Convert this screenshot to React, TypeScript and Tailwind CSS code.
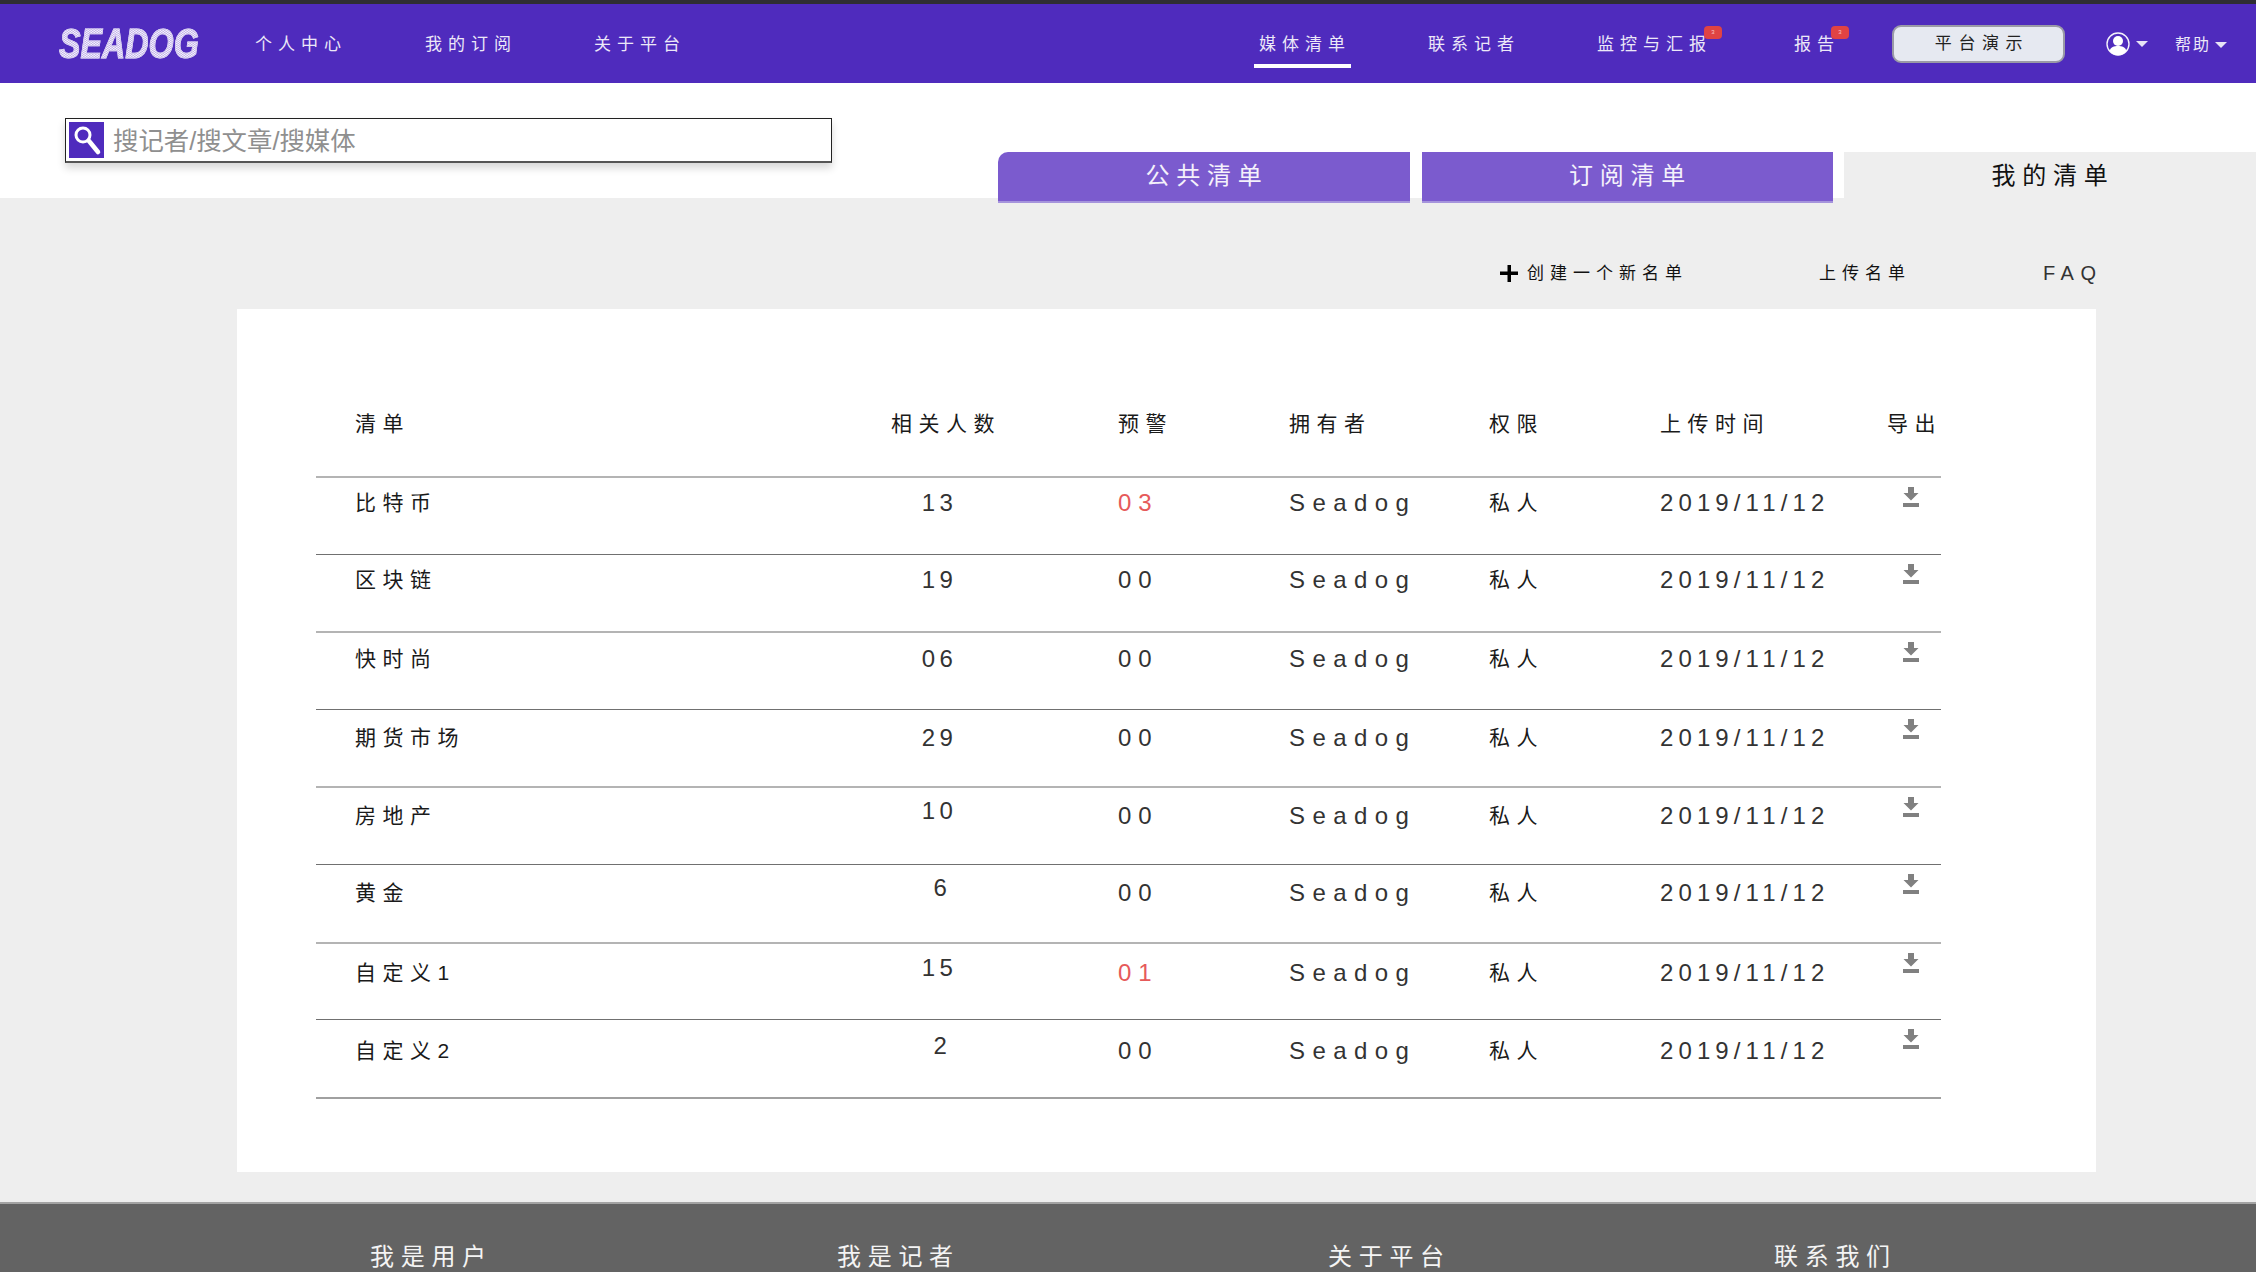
const PURPLE = "bg-[#4f2bbd]";

const rows = [
  { name: "比特币", count: "13", warn: "03", pt: "pt-[15px]", line: "border-t-2 border-[#b4b4b4]" },
  { name: "区块链", count: "19", warn: "00", pt: "pt-[15px]", line: "border-t border-[#707070]" },
  { name: "快时尚", count: "06", warn: "00", pt: "pt-[16px]", line: "border-t-2 border-[#b4b4b4]" },
  { name: "期货市场", count: "29", warn: "00", pt: "pt-[18px]", line: "border-t border-[#707070]" },
  { name: "房地产", count: "10", warn: "00", pt: "pt-[18px]", line: "border-t-2 border-[#b4b4b4]", up: true },
  { name: "黄金", count: "6", warn: "00", pt: "pt-[18px]", line: "border-t border-[#707070]", up: true },
  { name: "自定义1", count: "15", warn: "01", pt: "pt-[19px]", line: "border-t-2 border-[#b4b4b4]", up: true },
  { name: "自定义2", count: "2", warn: "00", pt: "pt-[21px]", line: "border-t border-[#707070]", up: true },
];

function Caret() {
  return (
    <svg width="12" height="6" viewBox="0 0 12 6" className="fill-[#e8e4f6]">
      <path d="M0 0h12L6 6z" />
    </svg>
  );
}

function Badge({ className }: { className: string }) {
  return (
    <span className={`absolute top-[-6px] flex h-[13px] w-[18px] items-center justify-center rounded-[4px] bg-[#e04343] text-[6px] leading-none tracking-normal text-[#f7c3c3] ${className}`}>
      3
    </span>
  );
}

function DownloadIcon() {
  return (
    <svg width="16" height="20" viewBox="0 0 16 20" className="fill-[#808080]">
      <path d="M5 0h6v6h4.500L8 13.500.5 6H5z" />
      <rect x="0" y="16" width="16" height="4" />
    </svg>
  );
}

export default function App() {
  return (
    <div className="relative h-[1272px] w-[2256px] overflow-hidden bg-[#eeeeee] font-[Liberation_Sans,Noto_Sans_CJK_SC,sans-serif] text-[#1a1a1a]">
      <div className="h-[4px] bg-[#2f2e33]" />

      <header className={`relative flex h-[79px] items-center pt-[2px] text-[17px] tracking-[6px] text-[#ece8f8] ${PURPLE}`}>
        <div className="absolute left-[59px] top-[24px] flex h-[31px] w-[138px] items-center">
          <span className="origin-left scale-x-[0.75] bg-[repeating-conic-gradient(#ffffff_0_25%,#b9a8e6_0_50%)] bg-[length:2px_2px] bg-clip-text text-[43px] leading-none font-bold tracking-normal text-transparent italic [-webkit-text-stroke:1px_#d6ccf0]">
            SEADOG
          </span>
        </div>
        <nav className="ml-[255px] flex">
          <a className="w-[170px]">个人中心</a>
          <a className="w-[169px]">我的订阅</a>
          <a>关于平台</a>
        </nav>
        <nav className="absolute left-[1259px] flex">
          <a className="relative w-[169px]">
            媒体清单
            <span className="absolute top-[32px] left-[-5px] h-[4px] w-[97px] bg-white" />
          </a>
          <a className="w-[169px]">联系记者</a>
          <a className="relative w-[197px]">
            监控与汇报
            <Badge className="left-[107px]" />
          </a>
          <a className="relative">
            报告
            <Badge className="left-[37px]" />
          </a>
        </nav>
        <button className="absolute left-[1892px] top-[21px] flex h-[38px] w-[173px] items-center justify-center rounded-[9px] border-2 border-[#9a9aa6] bg-[#e6e9f1] pl-[7px] text-[17px] tracking-[6.6px] text-[#222]">
          平台演示
        </button>
        <div className="absolute left-[2106px] top-[28px] flex items-center gap-[6px]">
          <svg width="24" height="24" viewBox="0 0 24 24">
            <circle cx="12" cy="12" r="11" fill="none" stroke="#f4f2fb" strokeWidth="1.4" />
            <circle cx="12" cy="9" r="5" fill="#fff" />
            <path d="M3.500 19c1-4 4.500-5 8.500-5s7.500 1 8.500 5c-2 2.800-5 4.300-8.500 4.300S5.500 21.800 3.500 19z" fill="#fff" />
          </svg>
          <Caret />
        </div>
        <div className="absolute left-[2175px] top-[32px] flex items-center text-[16px] leading-[17px] tracking-[2px]">
          <span className="w-[40px]">帮助</span>
          <Caret />
        </div>
      </header>

      <section className="relative h-[115px] bg-white">
        <div className="absolute left-[65px] top-[35px] flex h-[45px] w-[767px] items-center gap-[9px] border border-b-2 border-[#222] border-b-[#555] bg-white pl-[3px] shadow-[0_5px_8px_rgba(0,0,0,0.16)]">
          <span className={`flex h-[36px] w-[35px] shrink-0 items-center justify-center ${PURPLE}`}>
            <svg width="30" height="32" viewBox="0 0 30 32" fill="none" stroke="#fff" strokeLinecap="round">
              <circle cx="11" cy="11" r="7" strokeWidth="3" />
              <path d="M17 17l9 11" strokeWidth="4.500" />
            </svg>
          </span>
          <span className="pt-[3px] text-[25.4px] leading-none text-[#8f8f8f]">搜记者/搜文章/搜媒体</span>
        </div>

        <div className="absolute left-[998px] top-[69px] flex text-[24px] leading-[24px] tracking-[6.7px] text-[#f4f1fb]">
          <div className="flex h-[51px] w-[412px] items-center justify-center rounded-tl-[10px] border-b-2 border-[#a594dc] bg-[#7b5bce] pb-[2px] pl-[6px]">公共清单</div>
          <div className="ml-[12px] flex h-[51px] w-[411px] items-center justify-center border-b-2 border-[#a594dc] bg-[#7b5bce] pb-[2px] pl-[6px]">订阅清单</div>
          <div className="ml-[11px] flex h-[46px] w-[412px] items-center justify-center bg-[#eeeeee] pt-[2px] pl-[6px] text-[#111]">我的清单</div>
        </div>
      </section>

      <div className="absolute left-[1500px] top-[265px] flex h-[17px] items-center text-[17px] leading-[17px] tracking-[6px] text-[#111]">
        <svg width="18" height="17" viewBox="0 0 18 17" className="mr-[9px] fill-black">
          <rect x="7.500" y="0" width="3.500" height="17" />
          <rect x="0" y="6.500" width="18" height="3.500" />
        </svg>
        创建一个新名单
      </div>
      <div className="absolute left-[1819px] top-[265px] text-[17px] leading-[17px] tracking-[6px] text-[#111]">上传名单</div>
      <div className="absolute left-[2043px] top-[265px] text-[20px] leading-[17px] tracking-[6.5px] text-[#333]">FAQ</div>

      <main className="absolute left-[237px] top-[309px] h-[863px] w-[1859px] bg-white pt-[105px] pl-[79px] text-[21px] leading-[20px] tracking-[6.5px]">
        <div className="grid h-[62px] w-[1625px] grid-cols-[536px_227px_171px_200px_171px_227px_1fr] pl-[39px] whitespace-nowrap">
          <div>清单</div>
          <div>相关人数</div>
          <div>预警</div>
          <div>拥有者</div>
          <div>权限</div>
          <div>上传时间</div>
          <div>导出</div>
        </div>
        <div className="w-[1625px] border-b-2 border-[#a0a0a0]">
          {rows.map((row) => (
            <div
              key={row.name}
              className={`relative grid h-[77.6px] grid-cols-[536px_227px_171px_200px_171px_227px_1fr] pl-[39px] whitespace-nowrap ${row.line} ${row.pt}`}
            >
              <div>{row.name}</div>
              <div>
                <div className={`w-[97px] text-center text-[24px] tracking-[4.5px] text-[#333] ${row.count.length === 1 ? "pl-[6px]" : ""} ${row.up ? "-translate-y-[5px]" : ""}`}>{row.count}</div>
              </div>
              <div className={`text-[24px] tracking-[7px] ${row.warn === "00" ? "text-[#333]" : "text-[#e65a5a]"}`}>{row.warn}</div>
              <div className="text-[24px] tracking-[7.4px] text-[#333]">Seadog</div>
              <div>私人</div>
              <div className="text-[24px] tracking-[5.1px] text-[#333]">2019/11/12</div>
              <div className="absolute top-[9px] left-[1587px]">
                <DownloadIcon />
              </div>
            </div>
          ))}
        </div>
      </main>

      <footer className="absolute top-[1202px] left-0 grid h-[70px] w-[2256px] grid-cols-[467px_491px_446px_1fr] border-t-2 border-[#a3a3a3] bg-[#636363] pt-[41px] pl-[370px] text-[24px] leading-[24px] tracking-[6.7px] text-[#f4f4f4]">
        <div>我是用户</div>
        <div>我是记者</div>
        <div>关于平台</div>
        <div>联系我们</div>
      </footer>
    </div>
  );
}
